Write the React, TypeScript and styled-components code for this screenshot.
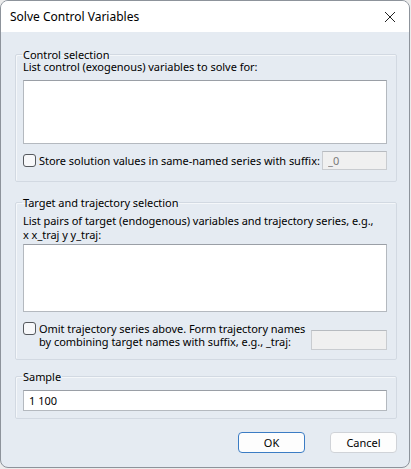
import React from "react";
import styled, { createGlobalStyle } from "styled-components";

const Global = createGlobalStyle`
  html, body { margin: 0; padding: 0; background: #ececec; }
  body { font-family: "Noto Sans", "Open Sans", sans-serif; }
  * { box-sizing: border-box; }
`;

const Window = styled.div`
  width: 410px;
  height: 468px;
  border: 1px solid #8d939b;
  border-radius: 8px;
  overflow: hidden;
  background: #e5ebf2;
  display: flex;
  flex-direction: column;
`;

const TitleBar = styled.div`
  height: 31px;
  background: #ffffff;
  display: flex;
  align-items: center;
  justify-content: space-between;
  padding: 0 10px 0 9px;
  font-size: 12px;
  color: #000;
`;

const CloseButton = styled.button`
  border: none;
  background: transparent;
  padding: 0;
  width: 14px;
  height: 14px;
  display: flex;
  align-items: center;
  justify-content: center;
  margin-right: 2px;
`;

const Body = styled.div`
  flex: 1;
  display: flex;
  flex-direction: column;
  padding: 17px 12px 0 14px;
  font-size: 11px;
  letter-spacing: -0.04px;
  color: #000;
`;

const Group = styled.fieldset<{ $mt?: number; $pb: number }>`
  margin: ${(p) => p.$mt ?? 0}px 0 0 0;
  border: 1px solid #d2d9e2;
  box-shadow: inset 1px 1px 0 #f4f7fa;
  border-radius: 2px;
  padding: 0 9px ${(p) => p.$pb}px 7px;
  min-width: 0;
  display: flex;
  flex-direction: column;
`;

const Legend = styled.legend`
  padding: 0 1px;
  margin-left: -1px;
  line-height: 11px;
  font-size: 11px;
`;

const Label = styled.div<{ $mt: number }>`
  margin-top: ${(p) => p.$mt}px;
  line-height: 13px;
  white-space: nowrap;
`;

const WrapLabel = styled.div<{ $mt: number }>`
  margin-top: ${(p) => p.$mt}px;
  line-height: 14px;
  white-space: nowrap;
`;

const TextArea = styled.textarea<{ $mt: number; $h: number }>`
  margin-top: ${(p) => p.$mt}px;
  height: ${(p) => p.$h}px;
  width: 100%;
  resize: none;
  background: #ffffff;
  border: 1px solid #b4b9bf;
  border-top-color: #9a9fa6;
  outline: none;
  padding: 2px 4px;
  font: inherit;
`;

const Row = styled.div<{ $mt: number; $h: number; $top?: boolean }>`
  margin-top: ${(p) => p.$mt}px;
  height: ${(p) => p.$h}px;
  display: flex;
  align-items: ${(p) => (p.$top ? "flex-start" : "center")};
  justify-content: space-between;
`;

const CheckLabel = styled.label`
  display: flex;
  align-items: flex-start;
  gap: 3px;
  line-height: 13px;
  white-space: nowrap;
`;

const Box = styled.span<{ $mt?: number }>`
  width: 13px;
  height: 13px;
  border: 1px solid #55595e;
  border-radius: 3px;
  background: #f7f8fa;
  flex: none;
  margin-top: ${(p) => p.$mt ?? 0}px;
`;

const TwoLine = styled.span`
  line-height: 13px;
`;

const SuffixInput = styled.input<{ $w: number; $h: number; $mt?: number }>`
  width: ${(p) => p.$w}px;
  height: ${(p) => p.$h}px;
  margin-top: ${(p) => p.$mt ?? 0}px;
  background: #f0f0f0;
  border: 1px solid #c9ccd0;
  border-top-color: #b7bbc0;
  font: inherit;
  color: #7a7a7a;
  padding: 0 5px;
  outline: none;
  flex: none;
`;

const SampleInput = styled.input`
  margin-top: 8px;
  width: 100%;
  height: 21px;
  background: #fff;
  border: 1px solid #b4b9bf;
  border-top-color: #9a9fa6;
  font: inherit;
  color: #000;
  padding: 0 5px;
  outline: none;
`;

const Buttons = styled.div`
  margin-top: 13px;
  display: flex;
  justify-content: flex-end;
  gap: 25px;
`;

const Button = styled.button<{ $primary?: boolean }>`
  width: 67px;
  height: 21px;
  background: #fdfdfd;
  border: ${(p) => (p.$primary ? "1.5px solid #3b7cc4" : "1px solid #d0d3d8")};
  border-radius: 4px;
  font-family: inherit;
  font-size: 11px;
  color: #000;
  padding: 0;
`;

export default function App() {
  return (
    <>
      <Global />
      <Window>
        <TitleBar>
          <span>Solve Control Variables</span>
          <CloseButton aria-label="Close">
            <svg width="12" height="12" viewBox="0 0 12 12">
              <path d="M1 1 L11 11 M11 1 L1 11" stroke="#222" strokeWidth="1" />
            </svg>
          </CloseButton>
        </TitleBar>
        <Body>
          <Group $pb={11}>
            <Legend>Control selection</Legend>
            <Label $mt={0}>List control (exogenous) variables to solve for:</Label>
            <TextArea $mt={7} $h={64} />
            <Row $mt={7} $h={19}>
              <CheckLabel>
                <Box />
                Store solution values in same-named series with suffix:
              </CheckLabel>
              <SuffixInput $w={65} $h={19} defaultValue="_0" />
            </Row>
          </Group>
          <Group $mt={15} $pb={9}>
            <Legend>Target and trajectory selection</Legend>
            <WrapLabel $mt={6}>
              List pairs of target (endogenous) variables and trajectory series, e.g.,
              <br />x x_traj y y_traj:
            </WrapLabel>
            <TextArea $mt={2} $h={68} />
            <Row $mt={10} $h={28} $top>
              <CheckLabel>
                <Box $mt={0} />
                <TwoLine>
                  Omit trajectory series above. Form trajectory names
                  <br />
                  by combining target names with suffix, e.g., _traj:
                </TwoLine>
              </CheckLabel>
              <SuffixInput $w={76} $h={20} $mt={8} />
            </Row>
          </Group>
          <Group $mt={11} $pb={7}>
            <Legend>Sample</Legend>
            <SampleInput defaultValue="1 100" />
          </Group>
          <Buttons>
            <Button $primary>OK</Button>
            <Button>Cancel</Button>
          </Buttons>
        </Body>
      </Window>
    </>
  );
}
